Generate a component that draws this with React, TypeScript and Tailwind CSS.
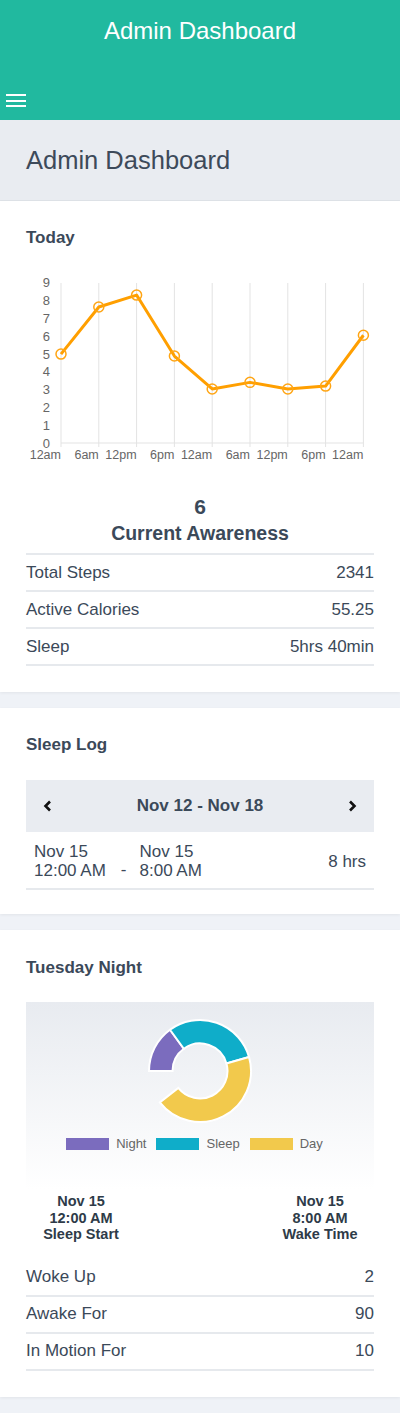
import { ReactNode } from "react";

const todayValues = [5, 7.65, 8.32, 4.89, 3.04, 3.41, 3.04, 3.2, 6.06];
const hourLabels = ["12am", "6am", "12pm", "6pm", "12am", "6am", "12pm", "6pm", "12am"];

function TodayChart() {
  const x0 = 61;
  const step = 37.8;
  const y0 = 443;
  const unit = 17.78;
  const pts = todayValues.map((v, i) => [x0 + i * step, y0 - v * unit]);

  return (
    <svg width="348" height="195" viewBox="26 270 348 195" className="block">
      {pts.map(([x], i) => (
        <line key={i} x1={x} x2={x} y1={283} y2={447} stroke="#e3e3e3" strokeWidth="1" />
      ))}
      <line x1={61} x2={363.4} y1={443} y2={443} stroke="#e3e3e3" strokeWidth="1" />
      {Array.from({ length: 10 }).map((_, v) => (
        <text key={v} x={50} y={y0 - v * unit + 4.5} textAnchor="end" fontSize="13" fill="#666">
          {v}
        </text>
      ))}
      {pts.map(([x], i) => (
        <text key={i} x={x} y={459} textAnchor="end" fontSize="12.5" fill="#666">
          {hourLabels[i]}
        </text>
      ))}
      <polyline
        points={pts.map((p) => p.join(",")).join(" ")}
        fill="none"
        stroke="#ff9f00"
        strokeWidth="3"
        strokeLinejoin="round"
      />
      {pts.map(([x, y], i) => (
        <circle key={i} cx={x} cy={y} r="5" fill="none" stroke="#ffa514" strokeWidth="1.5" />
      ))}
    </svg>
  );
}

function arcPath(cx: number, cy: number, R: number, r: number, a0: number, a1: number) {
  const rad = (a: number) => (a * Math.PI) / 180;
  const p = (a: number, rr: number) => [cx + rr * Math.sin(rad(a)), cy - rr * Math.cos(rad(a))];
  const large = a1 - a0 > 180 ? 1 : 0;
  const [x1, y1] = p(a0, R);
  const [x2, y2] = p(a1, R);
  const [x3, y3] = p(a1, r);
  const [x4, y4] = p(a0, r);
  return `M${x1} ${y1} A${R} ${R} 0 ${large} 1 ${x2} ${y2} L${x3} ${y3} A${r} ${r} 0 ${large} 0 ${x4} ${y4}Z`;
}

const donutSlices = [
  { label: "Night", color: "#7b6cbe", from: 270, to: 324 },
  { label: "Sleep", color: "#0fadc9", from: 324, to: 434 },
  { label: "Day", color: "#f2c94c", from: 434, to: 592 },
];

function Donut() {
  return (
    <svg width="110" height="110" viewBox="0 0 110 110" className="block">
      {donutSlices.map((s) => (
        <path
          key={s.label}
          d={arcPath(55, 55, 51, 27.5, s.from, s.to)}
          fill={s.color}
          stroke="#fff"
          strokeWidth="2"
        />
      ))}
    </svg>
  );
}

function Card({ title, children, pad }: { title: string; children: ReactNode; pad: string }) {
  return (
    <section className={`bg-white px-[26px] shadow-[0_1px_3px_rgba(0,0,0,0.06)] ${pad}`}>
      <h2 className="text-[17px] leading-[18px] font-bold text-[#3b4959]">{title}</h2>
      {children}
    </section>
  );
}

function StatRow({ label, value }: { label: string; value: string }) {
  return (
    <div className="flex h-[37px] items-center justify-between border-b-2 border-[#e6e9ed] text-[17px] text-[#3b4959]">
      <span>{label}</span>
      <span>{value}</span>
    </div>
  );
}

export default function App() {
  return (
    <div className="min-h-[1413px] bg-[#eff2f7] font-['Liberation_Sans',Arial,sans-serif]">
      {/* Top bar */}
      <header className="h-[120px] bg-[#21b99f] text-white">
        <h1 className="pt-[17px] text-center text-[24px] leading-[28px]">Admin Dashboard</h1>
        <button className="mt-[49px] ml-[6px] flex flex-col gap-[3.5px] bg-transparent border-none p-0" aria-label="Menu">
          <span className="block h-[2px] w-[20px] bg-white" />
          <span className="block h-[2px] w-[20px] bg-white" />
          <span className="block h-[2px] w-[20px] bg-white" />
        </button>
      </header>

      <div className="flex h-[81px] items-center border-b border-[#dfe3e8] bg-[#e9ecf1] px-[26px]">
        <h2 className="text-[25.5px] text-[#3d4a5a]">Admin Dashboard</h2>
      </div>

      {/* Today */}
      <Card title="Today" pad="pt-[28px] pb-[26px]">
        <div className="mt-[23px]">
          <TodayChart />
        </div>
        <div className="mt-[30px] text-center font-bold text-[#3b4959]">
          <div className="text-[21px] leading-[24px]">6</div>
          <div className="mt-[2px] text-[19.5px] leading-[24px]">Current Awareness</div>
        </div>
        <div className="mt-[8px] border-t-2 border-[#e6e9ed]">
          <StatRow label="Total Steps" value="2341" />
          <StatRow label="Active Calories" value="55.25" />
          <StatRow label="Sleep" value="5hrs 40min" />
        </div>
      </Card>

      <div className="h-[16px]" />

      {/* Sleep Log */}
      <Card title="Sleep Log" pad="pt-[28px] pb-[24px]">
        <div className="mt-[26px] flex h-[52px] items-center justify-between bg-[#e9ecf1] px-[16px]">
          <svg width="12" height="14" viewBox="0 0 12 14">
            <polyline points="8,2.5 3.5,7 8,11.5" fill="none" stroke="#111" strokeWidth="2.6" />
          </svg>
          <span className="text-[17px] font-bold text-[#3b4959]">Nov 12 - Nov 18</span>
          <svg width="12" height="14" viewBox="0 0 12 14">
            <polyline points="4,2.5 8.5,7 4,11.5" fill="none" stroke="#111" strokeWidth="2.6" />
          </svg>
        </div>
        <div className="flex items-center border-b-2 border-[#e6e9ed] pt-[10px] pb-[8px] pl-[8px] pr-[8px] text-[17px] leading-[19px] text-[#3b4959]">
          <div>
            <div>Nov 15</div>
            <div>12:00 AM</div>
          </div>
          <div className="self-end pl-[15px] pr-[13px] pb-[1px]">-</div>
          <div>
            <div>Nov 15</div>
            <div>8:00 AM</div>
          </div>
          <div className="ml-auto">8 hrs</div>
        </div>
      </Card>

      <div className="h-[16px]" />

      {/* Tuesday Night */}
      <Card title="Tuesday Night" pad="pt-[29px] pb-[26px]">
        <div className="mt-[25px] flex h-[188px] flex-col items-center bg-linear-to-b from-[#e8ebf0] to-white pt-[14px]">
          <Donut />
          <div className="mt-[10px] flex items-center pr-[11px] text-[13px] leading-[15px] text-[#666]">
            {donutSlices.map((s, i) => (
              <div key={s.label} className={`flex items-center ${i > 0 ? "ml-[10px]" : ""}`}>
                <span className="block h-[12px] w-[43px]" style={{ backgroundColor: s.color }} />
                <span className="ml-[7px]">{s.label}</span>
              </div>
            ))}
          </div>
        </div>
        <div className="mt-[3px] flex justify-between text-center text-[14.5px] leading-[16.5px] font-bold text-[#2e3b48]">
          <div className="w-[110px]">
            <div>Nov 15</div>
            <div>12:00 AM</div>
            <div>Sleep Start</div>
          </div>
          <div className="w-[108px]">
            <div>Nov 15</div>
            <div>8:00 AM</div>
            <div>Wake Time</div>
          </div>
        </div>
        <div className="mt-[17px]">
          <StatRow label="Woke Up" value="2" />
          <StatRow label="Awake For" value="90" />
          <StatRow label="In Motion For" value="10" />
        </div>
      </Card>
    </div>
  );
}
